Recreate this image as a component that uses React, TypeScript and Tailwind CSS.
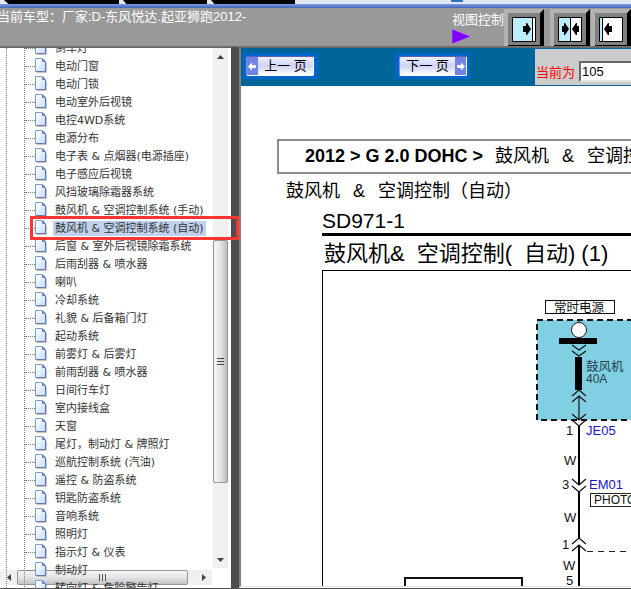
import { useState } from 'react';
import { clsx } from 'clsx';

const TREE_ITEMS = [
  '倒车灯',
  '电动门窗',
  '电动门锁',
  '电动室外后视镜',
  '电控4WD系统',
  '电源分布',
  '电子表 & 点烟器(电源插座)',
  '电子感应后视镜',
  '风挡玻璃除霜器系统',
  '鼓风机 & 空调控制系统 (手动)',
  '鼓风机 & 空调控制系统 (自动)',
  '后窗 & 室外后视镜除霜系统',
  '后雨刮器 & 喷水器',
  '喇叭',
  '冷却系统',
  '礼貌 & 后备箱门灯',
  '起动系统',
  '前雾灯 & 后雾灯',
  '前雨刮器 & 喷水器',
  '日间行车灯',
  '室内接线盒',
  '天窗',
  '尾灯，制动灯 & 牌照灯',
  '巡航控制系统 (汽油)',
  '遥控 & 防盗系统',
  '钥匙防盗系统',
  '音响系统',
  '照明灯',
  '指示灯 & 仪表',
  '制动灯',
  '转向灯 & 危险警告灯',
];

function DocIcon() {
  return (
    <svg width="12" height="16" viewBox="0 0 12 16" className="shrink-0">
      <defs>
        <linearGradient id="doc" x1="0" y1="0" x2="1" y2="1">
          <stop offset="0.1" stopColor="#ffffff" />
          <stop offset="1" stopColor="#bcdcfc" />
        </linearGradient>
      </defs>
      <path d="M1.500 14.500h10V5" fill="none" stroke="#c4c4cc" />
      <path d="M.5.5h7l3 3v10H.5z" fill="url(#doc)" stroke="#7c9cd8" />
      <path d="M7.500 1v2.500H10z" fill="#7e9ad4" stroke="#6482c4" />
      <path d="M10.500 4v9.500H1" fill="none" stroke="#6c74ac" />
    </svg>
  );
}

function TabStrip() {
  return (
    <div className="shrink-0">
      <div className="flex h-1 gap-1 bg-[#dfe6f4] pl-1">
        {[0, 1, 2].map(i => (
          <svg key={i} height="4" viewBox="0 0 100 4" preserveAspectRatio="none"
            className={i === 0 ? 'w-[115px]' : 'w-[84px]'}>
            <path d="M0 0h100v4H4z" fill="#000" />
          </svg>
        ))}
        <div className="ml-[152px] h-[2px] w-3 bg-[#2f6fc4]" />
      </div>
      <div className="h-1 bg-gradient-to-b from-[#7f9cdb] to-[#3f66b8]" />
    </div>
  );
}

function ViewButton({ label, kind }: { label: string; kind: 'right' | 'both' | 'left' }) {
  return (
    <button aria-label={label} className="h-[37px] w-10 shrink-0">
      <svg width="40" height="37" viewBox="0 0 40 37">
        <path d="M0 0h40v37H0z" fill="#b2b2b2" />
        <path d="M4 4h32v32H4z" fill="#808080" />
        <path d="M36 4l4-4v37H4v-1h32z" fill="#000" />
        <path d="M8.500 8.500h23v24h-23z" fill={kind === 'left' ? '#fff' : '#bdeeff'} stroke="#000" />
        {kind === 'right' && (
          <>
            <path d="M28.500 9h2.500v23h-2.500z" fill="#fff" />
            <path d="M28.500 8v25" stroke="#000" />
            <path d="M19 17h3v-3h1l4 6-4 6h-1v-3h-3z" />
          </>
        )}
        {kind === 'both' && (
          <>
            <path d="M20 9h11v23H20z" fill="#fff" />
            <path d="M20.500 8v25" stroke="#000" />
            <path d="M12 17h2v-3h1l4 6-4 6h-1v-3h-2zM29 17h-2v-3h-1l-4 6 4 6h1v-3h2z" />
          </>
        )}
        {kind === 'left' && (
          <>
            <path d="M9 9h2v23H9z" fill="#bdeeff" />
            <path d="M11.500 8v25" stroke="#000" />
            <path d="M21 17h-3v-3h-1l-4 6 4 6h1v-3h3z" />
          </>
        )}
      </svg>
    </button>
  );
}

function Header() {
  return (
    <header className="flex h-[39px] shrink-0 justify-between overflow-hidden border-b border-[#707070] bg-[#999999] text-[13px] leading-[18px] text-white">
      <h1 className="-ml-[3px] whitespace-nowrap">当前车型：厂家:D-东风悦达.起亚狮跑2012-</h1>
      <div className="flex shrink-0 pt-px">
        <div className="pt-[2px]">
          <div>视图控制</div>
          <svg width="20" height="15" viewBox="0 0 20 15">
            <path d="M0 0l19 7.500L0 15z" fill="#8000ff" stroke="#c9a6ee" strokeWidth="0.500" />
          </svg>
        </div>
        <ViewButton label="展开左侧" kind="right" />
        <div className="ml-[6px] flex gap-px">
          <ViewButton label="居中" kind="both" />
          <ViewButton label="展开右侧" kind="left" />
        </div>
      </div>
    </header>
  );
}

function Sidebar({ selected, onSelect }: { selected: string; onSelect: (s: string) => void }) {
  return (
    <nav className="relative flex w-[231px] shrink-0 overflow-hidden border-t border-[#696969] bg-white">
      {/* Horizontal scrollbar, the tree is painted over it */}
      <div className="absolute bottom-[3px] left-0 flex h-[15px] w-[212px] items-center bg-[#f0f0f0]">
        <div className="flex w-[17px] justify-center">
          <svg width="4" height="7"><path d="M4 0v7L0 3.500z" fill="#404040" /></svg>
        </div>
        <div className="flex h-[15px] w-[171px] items-center justify-center gap-[2px] rounded-xs border border-[#959595] bg-gradient-to-b from-[#f4f4f4] via-[#e4e4e6] to-[#c4c4c8]">
          <i className="h-[7px] w-px bg-[#555]" />
          <i className="h-[7px] w-px bg-[#555]" />
          <i className="h-[7px] w-px bg-[#555]" />
        </div>
        <div className="flex flex-1 justify-center pl-2">
          <svg width="4" height="7"><path d="M0 0v7l4-3.500z" fill="#404040" /></svg>
        </div>
      </div>

      <div className="relative ml-[6px] min-w-0 flex-1 overflow-hidden border-l border-dotted border-[#808080]">
        <ul className="-mt-[9px] ml-[17px] border-l border-dotted border-[#808080]">
          {TREE_ITEMS.map(item => (
            <li key={item}>
              <a href="#" onClick={() => onSelect(item)}
                className="flex h-[18px] items-center whitespace-nowrap text-[11px] leading-[15px] text-[#333333]">
                <span className="w-[10px] border-t border-dotted border-[#808080]" />
                <DocIcon />
                <span className={clsx('ml-[6px] px-[2px]', item === selected && 'bg-[#c1d2ee]')}>{item}</span>
              </a>
            </li>
          ))}
        </ul>
      </div>

      {/* Vertical scrollbar */}
      <div className="relative mr-[3px] mb-5 flex w-[15px] shrink-0 flex-col bg-[#f0f0f0]">
        <div className="flex h-[17px] items-center justify-center">
          <svg width="7" height="4"><path d="M0 4h7L3.500 0z" fill="#404040" /></svg>
        </div>
        <div className="flex min-h-0 flex-1 flex-col">
          <div className="h-[36%]" />
          <div className="flex h-[50%] flex-col items-center justify-center gap-[2px] rounded-xs border border-[#959595] bg-gradient-to-r from-[#f6f6f6] via-[#e4e4e6] to-[#bcbcc2]">
            <i className="h-px w-[7px] bg-[#444]" />
            <i className="h-px w-[7px] bg-[#444]" />
            <i className="h-px w-[7px] bg-[#444]" />
          </div>
        </div>
        <div className="flex h-[17px] items-center justify-center">
          <svg width="7" height="4"><path d="M0 0h7L3.500 4z" fill="#404040" /></svg>
        </div>
      </div>
    </nav>
  );
}

function PageButton({ children, dir }: { children: string; dir: 'prev' | 'next' }) {
  return (
    <button className={clsx(
      'flex h-[26px] w-[75px] shrink-0 border-[3px] border-[#0066cc] bg-[#0066cc]',
      dir === 'next' && 'flex-row-reverse'
    )}>
      <span className={clsx(
        'flex h-5 w-[68px] items-center overflow-hidden rounded-xs border border-t-[#5a62b0] border-r-white border-b-white border-l-[#8a90d8] bg-gradient-to-b from-[#f0f0ff] via-[#cfd2f8] to-[#ffffff]',
        dir === 'next' && 'flex-row-reverse'
      )}>
        <span className="flex h-full w-[11px] items-center justify-center bg-[#6f84e4]">
          <svg width="9" height="9" viewBox="0 0 9 9" className={clsx(dir === 'next' && 'rotate-180')}>
            <path d="M0 4.500L4 .5V3h4v3H4v2.500z" fill="#fff" />
          </svg>
        </span>
        <span className="flex-1 text-center text-[13px] leading-[18px] text-black">{children}</span>
      </span>
    </button>
  );
}

function Toolbar() {
  const [page, setPage] = useState('105');
  return (
    <div className="flex h-[38px] shrink-0 bg-[#006699] pt-px">
      <div className="flex shrink-0 gap-[77px] pt-1 pr-[65px] pl-[2px]">
        <PageButton dir="prev">上一 页</PageButton>
        <PageButton dir="next">下一 页</PageButton>
      </div>
      <div className="mb-px flex min-w-0 flex-1 items-end gap-1 overflow-hidden bg-[#cccccc] pb-[3px] pl-px">
        <label htmlFor="page-no" className="shrink-0 text-[13px] leading-[18px] text-[#ff0000]">当前为</label>
        <input id="page-no" value={page} onChange={e => setPage(e.target.value)}
          className="h-[21px] w-20 shrink-0 border-2 border-t-[#696969] border-r-[#e3e3e3] border-b-[#e3e3e3] border-l-[#696969] bg-white px-px text-[13px] text-black" />
      </div>
    </div>
  );
}

function WiringDiagram() {
  return (
    <svg width="420" height="340" viewBox="323 271 420 340" className="block max-w-none"
      fontSize="13" fill="#111">
      <rect x="405" y="578" width="117" height="40" fill="none" stroke="#111" strokeWidth="2" />

      {/* Power source */}
      <rect x="545.500" y="300.500" width="69" height="13" fill="#fff" stroke="#111" />
      <text x="554" y="312" fontSize="12.500">常时电源</text>
      <rect x="537" y="320" width="150" height="100" fill="#80cfe2" stroke="#111" strokeWidth="2" strokeDasharray="6 4" />
      <path d="M579 320v4" stroke="#111" />
      <circle cx="579" cy="330" r="7.500" fill="#fff" stroke="#222" />
      <rect x="559" y="338" width="38" height="6" fill="#000" />

      {/* Fuse */}
      <rect x="575" y="357" width="7" height="33" fill="#000" />
      <path d="M572 345l7 5 7-5M572 351l7 5 7-5M572 396l7-6 7 6M572 402l7-6 7 6M579 396v24M572 414l7 6 7-6M572 420l7 6 7-6"
        fill="none" stroke="#111" strokeWidth="1.200" />
      <text x="586" y="371" fontSize="12.500" fill="#24404c">鼓风机</text>
      <text x="586" y="383" fontSize="12" fill="#24404c">40A</text>

      {/* Wire run */}
      <path d="M579 426v58M579 492v46M579 545v60" stroke="#000" strokeWidth="2" />
      <path d="M572 479l7 6 7-6M572 486l7 6 7-6M572 544l7-6 7 6M572 551l7-6 7 6" fill="none" stroke="#111" strokeWidth="1.300" />
      <path d="M587 551.500h150" stroke="#222" strokeDasharray="6 5" />
      <text x="566" y="435">1</text>
      <text x="586" y="435" fill="#1414d8">JE05</text>
      <text x="564" y="465">W</text>
      <text x="562" y="489">3</text>
      <text x="589" y="489" fill="#1414d8">EM01</text>
      <rect x="590.500" y="493.500" width="80" height="13" fill="#fff" stroke="#222" />
      <text x="594" y="504" fontSize="12">PHOTO</text>
      <text x="564" y="522">W</text>
      <text x="562" y="549">1</text>
      <text x="563" y="570">W</text>
      <text x="566" y="585">5</text>
    </svg>
  );
}

function Manual() {
  return (
    <article className="min-h-0 flex-1 overflow-hidden pt-[53px] pl-9 whitespace-nowrap text-black">
      <div className="flex h-[35px] w-[640px] items-center border-2 border-[#8c8c8c] pl-[26px] text-[18px]">
        <b>2012 &gt; G 2.0 DOHC &gt;</b>
        <span className="ml-3">鼓风机</span>
        <span className="mx-[13px]">&amp;</span>
        <span>空调控制（自动）</span>
      </div>
      <h2 className="mt-[5px] ml-[9px] flex text-[18px] leading-6">
        <span>鼓风机</span>
        <span className="mx-[13px]">&amp;</span>
        <span>空调控制（自动）</span>
      </h2>
      <section className="ml-[45px]">
        <h3 className="border-b-[3px] border-black pt-[6px] text-[21px] leading-6">SD971-1</h3>
        <h4 className="flex h-[34px] items-center pl-[2px] text-[22px]">
          <span>鼓风机&amp;</span>
          <span className="ml-3">空调控制(</span>
          <span className="ml-3">自动)</span>
          <span className="ml-[6px]">(1)</span>
        </h4>
        <div className="border-t border-l border-black">
          <WiringDiagram />
        </div>
      </section>
    </article>
  );
}

export default function App() {
  const [selected, setSelected] = useState('鼓风机 & 空调控制系统 (自动)');

  return (
    <div className="flex h-screen flex-col overflow-hidden bg-white font-['Liberation_Sans','Noto_Sans_CJK_SC',sans-serif]">
      <TabStrip />
      <Header />
      <div className="relative flex min-h-0 flex-1 border-b border-[#505050]">
        <div className="flex font-['DejaVu_Sans','Noto_Sans_CJK_SC',sans-serif]">
          <Sidebar selected={selected} onSelect={setSelected} />
        </div>
        <div className="w-2 shrink-0 bg-[#4d4d4d]" />
        <main className="mb-px flex min-w-0 flex-1 flex-col border-t border-b border-l-2 border-t-[#696969] border-b-[#e3e3e3] border-l-[#808080]">
          <Toolbar />
          <Manual />
        </main>
        {/* Red marker around the current entry */}
        <div className="pointer-events-none absolute top-[169px] left-[30px] h-6 w-[209px] border-[3px] border-[#fb3434]" />
      </div>
    </div>
  );
}
